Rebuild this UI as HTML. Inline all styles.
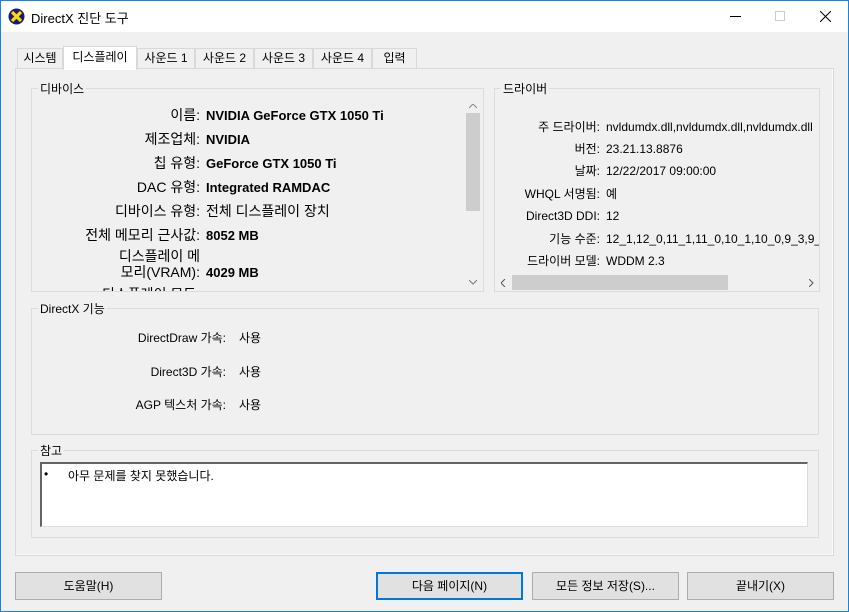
<!DOCTYPE html>
<html><head><meta charset="utf-8"><style>
*{box-sizing:border-box;margin:0;padding:0}
body{width:849px;height:612px;background:#f0f0f0;font-family:"Liberation Sans","Noto Sans CJK KR",sans-serif;font-size:12px;color:#000;position:relative;overflow:hidden}
.abs{position:absolute}
.win{left:0;top:0;width:849px;height:612px;border:1px solid #1883d7}
.title{left:1px;top:1px;width:847px;height:31px;background:#fff}
.grp{position:absolute;border:1px solid #dcdcdc}
.grp .lg{position:absolute;top:-9px;left:6px;background:#f0f0f0;padding:0 2px;font-size:12px}
.tab{position:absolute;top:48px;height:20px;border:1px solid #d9d9d9;border-bottom:none;background:#f0f0f0;font-size:12px;line-height:18px;text-align:center}
.btn{position:absolute;top:572px;height:28px;background:#e1e1e1;border:1px solid #adadad;text-align:center;line-height:26px;font-size:12px}
.row{position:absolute;left:0;white-space:nowrap;line-height:20px}
.row .l{display:inline-block;text-align:right}
.dr .l{width:105px}
.dv .l{width:168px;font-size:14px}
.dv .v{font-size:13px;font-weight:bold;margin-left:6px}
.dr .v{margin-left:6px}
</style></head><body>
<div class="abs win"></div>
<div class="abs title"></div>
<svg class="abs" style="left:8px;top:8px" width="17" height="17" viewBox="0 0 17 17"><circle cx="8.5" cy="8.5" r="8" fill="#1a1a6e"/><path d="M4 4 L13 13 M13 4 L4 13" stroke="#f5d90a" stroke-width="3.2"/></svg>
<div class="abs" style="left:31px;top:8px;font-size:13px">DirectX 진단 도구</div>
<div class="abs" style="left:730px;top:16px;width:11px;height:1px;background:#000"></div>
<div class="abs" style="left:775px;top:11px;width:10px;height:10px;border:1px solid #ccc"></div>
<svg class="abs" style="left:820px;top:11px" width="11" height="11"><path d="M0 0L11 11M11 0L0 11" stroke="#000" stroke-width="1"/></svg>

<div class="abs" style="left:15px;top:68px;width:819px;height:488px;background:#fafafa;border:1px solid #d9d9d9"></div>
<div class="abs" style="left:16px;top:69px;width:816px;height:485px;background:#f0f0f0"></div>
<div class="tab" style="left:17px;width:46px">시스템</div>
<div class="tab" style="left:137px;width:58px">사운드 1</div>
<div class="tab" style="left:195px;width:59px">사운드 2</div>
<div class="tab" style="left:254px;width:59px">사운드 3</div>
<div class="tab" style="left:313px;width:59px">사운드 4</div>
<div class="tab" style="left:372px;width:45px">입력</div>
<div class="tab" style="left:63px;top:46px;width:74px;height:24px;background:#fff;border-color:#d9d9d9;line-height:20px">디스플레이</div>

<div class="grp" style="left:31px;top:88px;width:453px;height:204px"><span class="lg">디바이스</span></div>
<div class="abs dv" style="left:32px;top:96px;width:433px;height:195px;overflow:hidden">
<div class="row" style="top:9px"><span class="l">이름:</span><span class="v">NVIDIA GeForce GTX 1050 Ti</span></div>
<div class="row" style="top:33px"><span class="l">제조업체:</span><span class="v">NVIDIA</span></div>
<div class="row" style="top:57px"><span class="l">칩 유형:</span><span class="v">GeForce GTX 1050 Ti</span></div>
<div class="row" style="top:81px"><span class="l">DAC 유형:</span><span class="v">Integrated RAMDAC</span></div>
<div class="row" style="top:105px"><span class="l">디바이스 유형:</span><span class="v" style="font-weight:normal;font-size:14px">전체 디스플레이 장치</span></div>
<div class="row" style="top:129px"><span class="l">전체 메모리 근사값:</span><span class="v">8052 MB</span></div>
<div class="row" style="top:151px;line-height:18px"><span class="l">디스플레이 메</span></div>
<div class="row" style="top:166px"><span class="l">모리(VRAM):</span><span class="v">4029 MB</span></div>
<div class="row" style="top:188px"><span class="l">디스플레이 모드:</span></div>
</div>
<div class="abs" style="left:465px;top:96px;width:16px;height:195px;background:#f0f0f0"></div>
<div class="abs" style="left:466px;top:113px;width:14px;height:98px;background:#cdcdcd"></div>
<svg class="abs" style="left:469px;top:104px" width="8" height="5"><path d="M0 4L4 0L8 4" stroke="#888" fill="none"/></svg>
<svg class="abs" style="left:469px;top:280px" width="8" height="5"><path d="M0 0L4 4L8 0" stroke="#777" fill="none"/></svg>

<div class="grp" style="left:494px;top:88px;width:326px;height:204px"><span class="lg">드라이버</span></div>
<div class="abs dr" style="left:495px;top:96px;width:324px;height:178px;overflow:hidden">
<div class="row" style="top:21px"><span class="l">주 드라이버:</span><span class="v">nvldumdx.dll,nvldumdx.dll,nvldumdx.dll</span></div>
<div class="row" style="top:43px"><span class="l">버전:</span><span class="v">23.21.13.8876</span></div>
<div class="row" style="top:65px"><span class="l">날짜:</span><span class="v">12/22/2017 09:00:00</span></div>
<div class="row" style="top:88px"><span class="l">WHQL 서명됨:</span><span class="v">예</span></div>
<div class="row" style="top:110px"><span class="l">Direct3D DDI:</span><span class="v">12</span></div>
<div class="row" style="top:133px"><span class="l">기능 수준:</span><span class="v">12_1,12_0,11_1,11_0,10_1,10_0,9_3,9_2</span></div>
<div class="row" style="top:155px"><span class="l">드라이버 모델:</span><span class="v">WDDM 2.3</span></div>
</div>
<div class="abs" style="left:495px;top:274px;width:324px;height:17px;background:#f0f0f0"></div>
<div class="abs" style="left:512px;top:275px;width:216px;height:15px;background:#cdcdcd"></div>
<svg class="abs" style="left:501px;top:279px" width="5" height="8"><path d="M4 0L0 4L4 8" stroke="#555" fill="none"/></svg>
<svg class="abs" style="left:809px;top:279px" width="5" height="8"><path d="M0 0L4 4L0 8" stroke="#555" fill="none"/></svg>

<div class="grp" style="left:31px;top:308px;width:788px;height:127px"><span class="lg">DirectX 기능</span></div>
<div class="abs" style="right:623px;top:329px;text-align:right">DirectDraw 가속:</div>
<div class="abs" style="right:623px;top:363px;text-align:right">Direct3D 가속:</div>
<div class="abs" style="right:623px;top:396px;text-align:right">AGP 텍스처 가속:</div>
<div class="abs" style="left:239px;top:329px">사용</div>
<div class="abs" style="left:239px;top:363px">사용</div>
<div class="abs" style="left:239px;top:396px">사용</div>

<div class="grp" style="left:31px;top:450px;width:788px;height:88px"><span class="lg">참고</span></div>
<div class="abs" style="left:40px;top:462px;width:768px;height:65px;background:#fff;border:1px solid #dcdcdc;border-top:2px solid #646464;border-left:2px solid #646464"></div>
<div class="abs" style="left:44px;top:467px">•</div>
<div class="abs" style="left:68px;top:467px">아무 문제를 찾지 못했습니다.</div>

<div class="btn" style="left:15px;width:147px">도움말(H)</div>
<div class="btn" style="left:376px;width:147px;border:2px solid #0078d7;line-height:24px">다음 페이지(N)</div>
<div class="btn" style="left:532px;width:147px">모든 정보 저장(S)...</div>
<div class="btn" style="left:687px;width:147px">끝내기(X)</div>
</body></html>
